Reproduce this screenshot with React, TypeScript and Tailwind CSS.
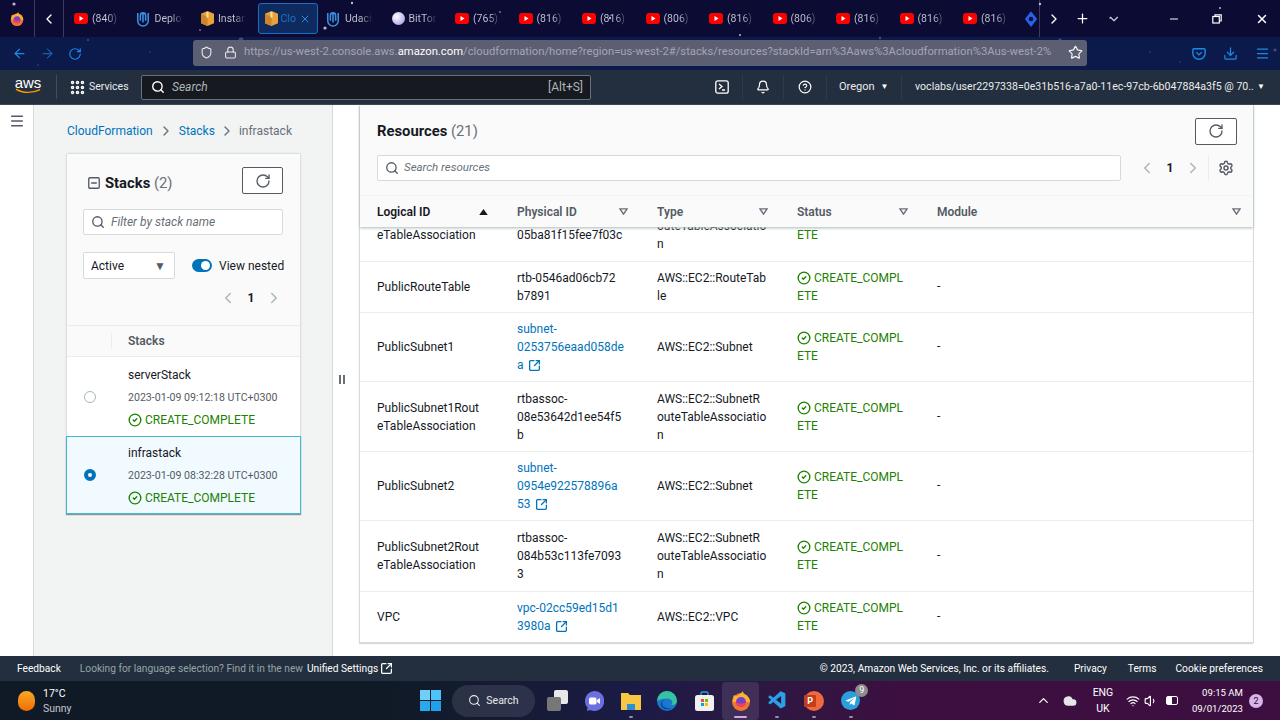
import { ReactNode } from "react";
import {
  ArrowLeft, ArrowRight, RotateCw, Shield, Lock, Star, Search, Bell, CircleHelp, Settings,
  ChevronLeft, ChevronRight, ChevronDown, ChevronUp, X, Plus, Minus, Menu, CircleCheck, SquareMinus,
  SquareArrowOutUpRight, Wifi, Volume1, Cloud, Grip, Download,
} from "lucide-react";
import { FaTelegramPlane } from "react-icons/fa";
import { VscVscode } from "react-icons/vsc";

const Youtube = () => (
  <svg viewBox="0 0 14 11" className="w-[14px] h-[11px] shrink-0">
    <rect width="14" height="11" rx="3" fill="#f00" />
    <path d="M5.5 3l4 2.5-4 2.5z" fill="#fff" />
  </svg>
);

const Udacity = () => (
  <svg viewBox="0 0 16 18" className="w-[14px] h-[16px] shrink-0 -ml-[2px] mr-[1px]" fill="none" stroke="#3b8fe0" strokeWidth="1.8">
    <path d="M2 2v9a6 6 0 0 0 12 0V2" />
    <path d="M8 13V2c-2 0-3 1-3 3v6M8 2c2 0 3 1 3 3v6" />
  </svg>
);

const AwsBox = () => (
  <svg viewBox="0 0 14 16" className="w-[13px] h-[15px] shrink-0">
    <path d="M7 0l7 3v10l-7 3-7-3V3z" fill="#e8a33a" />
    <path d="M7 6v10l-7-3V3z" fill="#c9862a" />
    <path d="M6 1h2v6H6z" fill="#fbe3a8" />
  </svg>
);

const BitTorrent = () => (
  <span className="w-[13px] h-[13px] rounded-full shrink-0 bg-[radial-gradient(circle_at_35%_35%,#ffffff,#9a8ee0)]" />
);

const Firefox = ({ size }: { size: string }) => (
  <svg viewBox="0 0 20 20" className={size}>
    <circle cx="10" cy="11" r="9" fill="#f2762e" />
    <path d="M3 4c1 1 2 1 3 1 2-2 5-3 6-5 0 2 1 3 3 4 3 2 4 5 4 7H2c0-3 0-5 1-7z" fill="#f9b233" />
    <circle cx="10" cy="11" r="5" fill="#7b3fc4" />
    <path d="M5 11a5 5 0 0 0 10 0c-2 2-7 2-10 0z" fill="#f0405f" />
  </svg>
);

const Edge = () => (
  <svg viewBox="0 0 20 20" className="w-[20px] h-[20px]">
    <circle cx="10" cy="10" r="10" fill="#1a78cf" />
    <path d="M0 10a10 10 0 0 1 20 0c0 3-3 4.500-6 4 2.500-2 1.500-6.500-4-6.500-4 0-8 1-10 2.500z" fill="#35c4a2" />
    <path d="M8 16c-3-1-4-5-1-7.500C5 9 3 12 4 15c1 2 3 3.500 6 3.500 2 0 3.500-.5 5-1.500-2 .5-5 .5-7-1z" fill="#0f4f9e" />
  </svg>
);

const tabs = [
  { icon: <Youtube />, label: "(840) - Y" },
  { icon: <Udacity />, label: "Deploy" },
  { icon: <AwsBox />, label: "Instance" },
  { icon: <AwsBox />, label: "Cloud", active: true },
  { icon: <Udacity />, label: "Udacity" },
  { icon: <BitTorrent />, label: "BitTorr" },
  { icon: <Youtube />, label: "(765) Y" },
  { icon: <Youtube />, label: "(816) Y" },
  { icon: <Youtube />, label: "(816) Y" },
  { icon: <Youtube />, label: "(806) Y" },
  { icon: <Youtube />, label: "(816) Y" },
  { icon: <Youtube />, label: "(806) Y" },
  { icon: <Youtube />, label: "(816) Y" },
  { icon: <Youtube />, label: "(816) Y" },
  { icon: <Youtube />, label: "(816) Y" },
];

const stars = [
  [14, 4, 1.6], [88, 40, 1], [241, 40, 2.4], [325, 28, 1.6], [352, 3, 1.2], [610, 18, 1.2], [500, 12, 0.8],
  [1040, 4, 1.2], [1060, 40, 1.6], [1110, 18, 0.8], [1220, 8, 1], [1060, 58, 0.8], [1150, 52, 0.8], [1275, 50, 1.6],
  [150, 52, 0.7], [38, 65, 0.8], [880, 38, 1.2], [740, 35, 1], [1180, 62, 0.7], [200, 30, 0.8],
];

function BrowserChrome() {
  return (
    <div className="relative h-[70px] shrink-0 bg-[#0b0b33]">
      {/* starfield */}
      <svg className="absolute inset-0 w-[1280px] h-[70px]" viewBox="0 0 1280 70">
        {stars.map(([x, y, r], i) => (
          <circle key={i} cx={x} cy={y} r={r} fill="#dfe4ff" opacity="0.8" />
        ))}
      </svg>

      {/* tab strip */}
      <div className="relative h-[37px] flex items-center">
        <div className="w-[34px] flex justify-center">
          <Firefox size="w-[14px] h-[14px]" />
        </div>
        <div className="w-[30px] h-[37px] flex items-center justify-center border-l border-r border-white/20">
          <ChevronLeft size={16} className="text-white" />
        </div>
        <div className="flex items-center ml-[10px]">
          {tabs.map((t, i) =>
            t.active ? (
              <div key={i} className="w-[60px] -ml-[7px] mr-[10.5px] h-[31px] flex items-center gap-[3px] pl-[6px] rounded-[3px] border border-[#1b6fc0] bg-[#0e2a5e]">
                {t.icon}
                <span className="text-[10.5px] w-[15px] overflow-hidden whitespace-nowrap text-[#1f6fc0]">Clo</span>
                <X size={12} className="text-[#2b8ae6]" />
              </div>
            ) : (
              <div key={i} className="w-[63.5px] h-[31px] flex items-center gap-[4px]">
                {t.icon}
                <span className="w-[28px] text-[10.5px] overflow-hidden whitespace-nowrap bg-linear-to-r from-[#c8c8d6] from-55% to-transparent bg-clip-text text-transparent">
                  {t.label}
                </span>
              </div>
            )
          )}
        </div>
        <svg viewBox="0 0 16 18" className="w-[14px] h-[16px] -ml-[3px]">
          <path d="M8 0l7 9-7 9-7-9z" fill="#2563eb" />
          <circle cx="8" cy="9" r="2.6" fill="#0b0b33" />
        </svg>
        <div className="w-[30px] h-[37px] flex items-center justify-center border-l border-white/20 ml-[1px]">
          <ChevronRight size={16} className="text-white" />
        </div>
        <Plus size={15} className="text-white ml-[6px]" />
        <ChevronDown size={14} className="text-white/80 ml-[17px]" />
        <div className="ml-auto flex items-center text-white">
          <Minus size={12} className="mr-[32px]" />
          <svg viewBox="0 0 10 10" className="w-[10px] h-[10px] mr-[33px]" fill="none" stroke="#fff" strokeWidth="1.2">
            <rect x="0.8" y="2.5" width="6.5" height="6.5" />
            <path d="M3 2.5V0.8h6.2V7H7.3" />
          </svg>
          <X size={14} strokeWidth={2.5} className="mr-[11px]" />
        </div>
      </div>

      {/* url row */}
      <div className="relative h-[33px] flex items-center bg-[#0d2055]/70">
        <ArrowLeft size={15} className="ml-[12px] text-[#1b8ae6]" />
        <ArrowRight size={15} className="ml-[13px] text-[#1560a8]" />
        <RotateCw size={14} className="ml-[13px] text-[#1b8ae6]" />
        <div className="ml-[111px] w-[894px] h-[26px] -mt-[2px] rounded-[3px] bg-[#5c5e72] flex items-center">
          <Shield size={13} className="ml-[7px] text-white/85" />
          <Lock size={13} className="ml-[11px] text-white/85" />
          <span className="ml-[7px] w-[812px] overflow-hidden whitespace-nowrap text-[11.25px] text-[#a3a5b4]">
            https://us-west-2.console.aws.<span className="text-white">amazon.com</span>/cloudformation/home?region=us-west-2#/stacks/resources?stackId=arn%3Aaws%3Acloudformation%3Aus-west-2%
          </span>
          <Star size={15} className="ml-auto mr-[4px] text-white/90" />
        </div>
        <svg viewBox="0 0 16 16" className="w-[14px] h-[14px] ml-[105px]" fill="none" stroke="#1b8ae6" strokeWidth="1.6">
          <path d="M2 2h12a1 1 0 0 1 1 1v4a7 7 0 0 1-14 0V3a1 1 0 0 1 1-1z" />
          <path d="M5 6l3 3 3-3" />
        </svg>
        <Download size={15} className="ml-[17px] text-[#1b8ae6]" />
        <Menu size={15} className="ml-[17px] text-[#1b8ae6]" />
      </div>
    </div>
  );
}

function AwsNav() {
  return (
    <div className="h-[35px] shrink-0 bg-[#232f3e] flex items-center text-white text-[11px] border-b border-[#3b4754]">
      <div className="w-[56px] flex flex-col items-center relative">
        <span className="text-[15px] leading-[13px] font-normal -mt-[4px]" style={{ fontFamily: "'Liberation Sans', sans-serif" }}>aws</span>
        <svg viewBox="0 0 28 6" className="w-[27px] h-[6px] -mt-[1px]" fill="none">
          <path d="M1 1c7 4.5 17 4.5 25 .5" stroke="#ff9900" strokeWidth="1.5" />
        </svg>
      </div>
      <div className="w-px h-[24px] bg-[#414d5c]" />
      <Grip size={17} strokeWidth={3} className="ml-[12px]" />
      <span className="ml-[3px] w-[52px] text-[10.5px] text-[#e9ebed]">Services</span>
      <div className="w-[450px] h-[25px] flex items-center bg-[#16191f] border border-[#687078] rounded-[2px] text-[#aab7b8]">
        <Search size={14} strokeWidth={2.4} className="ml-[9px] text-white" />
        <span className="ml-[7px] italic text-[12px]">Search</span>
        <span className="ml-auto mr-[7px] text-[12px]">[Alt+S]</span>
      </div>
      <svg viewBox="0 0 14 14" className="w-[14px] h-[14px] ml-[124px]" fill="none" stroke="#fff" strokeWidth="1.3">
        <rect x="0.8" y="0.8" width="12.4" height="12.4" rx="2" />
        <path d="M4 4l3 2.5L4 9M7 10h3" />
      </svg>
      <div className="w-px h-[24px] bg-[#2f3b4a] ml-[13px]" />
      <Bell size={14} className="ml-[13px]" />
      <div className="w-px h-[24px] bg-[#2f3b4a] ml-[13px]" />
      <CircleHelp size={14} className="ml-[14px]" />
      <div className="w-px h-[24px] bg-[#2f3b4a] ml-[14px]" />
      <span className="ml-[12px] text-[#e9ebed]">Oregon</span>
      <span className="ml-[6px] text-[8px]">▼</span>
      <div className="w-px h-[24px] bg-[#2f3b4a] ml-[13px]" />
      <span className="ml-[12.5px] w-[339px] overflow-hidden whitespace-nowrap text-[10.6px] text-[#e9ebed]">voclabs/user2297338=0e31b516-a7a0-11ec-97cb-6b047884a3f5 @ 70...</span>
      <span className="ml-[3px] text-[8px]">▼</span>
    </div>
  );
}

const StatusOk = ({ children }: { children: ReactNode }) => (
  <span className="flex items-center gap-[3px] text-[#1d8102]">
    <CircleCheck size={14} strokeWidth={2.3} />
    {children}
  </span>
);

function Pager() {
  return (
    <div className="flex items-center text-[#aab7b8]">
      <ChevronLeft size={18} strokeWidth={2} />
      <span className="w-[28px] text-center text-[12px] font-bold text-[#16191f]">1</span>
      <ChevronRight size={18} strokeWidth={2} />
    </div>
  );
}

function RefreshButton({ w }: { w: string }) {
  return (
    <button className={`${w} h-[27px] flex items-center justify-center bg-white border border-[#545b64] rounded-[2px]`}>
      <RotateCw size={16} strokeWidth={2} className="text-[#545b64]" />
    </button>
  );
}

function StackRow({ name, date, selected }: { name: string; date: string; selected?: boolean }) {
  return (
    <div className={selected
      ? "h-[78px] flex items-center bg-[#f1faff] border-t border-[#44b9d6] shadow-[0_1px_1px_#879596] -mx-px border-x border-b"
      : "h-[79px] flex items-center"}>
      <div className="w-[45px] flex justify-center">
        {selected ? (
          <span className="w-[12px] h-[12px] rounded-full border-[4px] border-[#0073bb] bg-white" />
        ) : (
          <span className="w-[12px] h-[12px] rounded-full border border-[#aab7b8] bg-white" />
        )}
      </div>
      <div className={`ml-[16px] flex flex-col text-[12px] text-[#16191f] ${selected ? "pt-[2px]" : "pt-[4px]"}`}>
        <span className="leading-[18px]">{name}</span>
        <span className="leading-[18px] mt-[5px] text-[10.6px] text-[#545b64]">{date}</span>
        <span className="leading-[22px] mt-[2px]"><StatusOk>CREATE_COMPLETE</StatusOk></span>
      </div>
    </div>
  );
}

function LeftPane() {
  return (
    <div className="w-[300px] shrink-0 bg-[#f2f3f3] border-l border-r border-[#d5dbdb] pl-[33px] pr-[32px]">
      <div className="h-[49px] flex items-center text-[12px] pt-[2px]">
        <span className="text-[#0073bb]">CloudFormation</span>
        <ChevronRight size={16} className="text-[#687078] mx-[5px]" />
        <span className="text-[#0073bb]">Stacks</span>
        <ChevronRight size={16} className="text-[#687078] mx-[4px]" />
        <span className="text-[#687078]">infrastack</span>
      </div>
      <div className="bg-white shadow-[0_0_2px_#aab7b8]">
        <div className="bg-[#fafafa] h-[171px] pt-[13px] pl-[16px] pr-[17px]">
          <div className="flex items-center h-[27px]">
            <SquareMinus size={14} strokeWidth={2.3} className="text-[#545b64] ml-[4px] mt-[5px]" />
            <span className="ml-[4px] text-[14.8px] font-bold text-[#16191f] mt-[5px]">Stacks <span className="font-normal text-[#687078]">(2)</span></span>
            <div className="ml-auto"><RefreshButton w="w-[41px]" /></div>
          </div>
          <div className="mt-[15px] h-[26px] flex items-center bg-white border border-[#d5dbdb] rounded-[2px]">
            <Search size={14} strokeWidth={2.3} className="ml-[7px] text-[#545b64]" />
            <span className="ml-[6px] text-[12px] italic text-[#687078]">Filter by stack name</span>
          </div>
          <div className="mt-[17px] flex items-center">
            <div className="w-[92px] shrink-0 h-[27px] flex items-center justify-between pl-[7px] pr-[8px] bg-white border border-[#d5dbdb] rounded-[2px] text-[12px] text-[#16191f]">
              Active
              <span className="text-[12px] text-[#545b64]">▼</span>
            </div>
            <div className="ml-[17px] w-[20px] h-[13px] shrink-0 rounded-full bg-[#0073bb] relative">
              <span className="absolute right-[2px] top-[2px] w-[9px] h-[9px] rounded-full bg-white" />
            </div>
            <span className="ml-[7px] text-[12px] text-[#16191f] whitespace-nowrap">View nested</span>
          </div>
          <div className="mt-[10px] flex justify-end"><Pager /></div>
        </div>
        <div className="h-[32px] flex items-center bg-[#fafafa] border-t border-b border-[#eaeded] text-[12px] font-semibold text-[#545b64]">
          <div className="w-[45px] h-[16px] border-r border-[#eaeded]" />
          <span className="ml-[16px]">Stacks</span>
        </div>
        <StackRow name="serverStack" date="2023-01-09 09:12:18 UTC+0300" />
        <StackRow name="infrastack" date="2023-01-09 08:32:28 UTC+0300" selected />
      </div>
    </div>
  );
}

function ColHead({ label, strong, grow }: { label: string; strong?: boolean; grow?: boolean }) {
  return (
    <div className={`${grow ? "flex-1" : "w-[140px]"} h-full flex items-center pl-[17px] pr-[12px] justify-between text-[12px] font-semibold ${strong ? "text-[#16191f]" : "text-[#545b64]"} relative`}>
      {label}
      {strong ? (
        <svg viewBox="0 0 10 7" className="w-[9px] h-[6px]"><path d="M5 0l5 7H0z" fill="#16191f" /></svg>
      ) : (
        <svg viewBox="0 0 10 8" className="w-[9px] h-[7px]" fill="none" stroke="#687078" strokeWidth="1.6"><path d="M1 1h8L5 7z" /></svg>
      )}
    </div>
  );
}

type Row = {
  h: string;
  logical: string[];
  physical: string[];
  link?: boolean;
  type: string[];
};

const rows: Row[] = [
  { h: "h-[71px] -mt-[36px]", logical: ["PublicSubnet1Rout", "eTableAssociation"], physical: ["rtbassoc-", "05ba81f15fee7f03c"], type: ["AWS::EC2::SubnetR", "outeTableAssociatio", "n"] },
  { h: "h-[51px]", logical: ["PublicRouteTable"], physical: ["rtb-0546ad06cb72", "b7891"], type: ["AWS::EC2::RouteTab", "le"] },
  { h: "h-[69px]", logical: ["PublicSubnet1"], physical: ["subnet-", "0253756eaad058de", "a"], link: true, type: ["AWS::EC2::Subnet"] },
  { h: "h-[70px]", logical: ["PublicSubnet1Rout", "eTableAssociation"], physical: ["rtbassoc-", "08e53642d1ee54f5", "b"], type: ["AWS::EC2::SubnetR", "outeTableAssociatio", "n"] },
  { h: "h-[69px]", logical: ["PublicSubnet2"], physical: ["subnet-", "0954e922578896a", "53"], link: true, type: ["AWS::EC2::Subnet"] },
  { h: "h-[71px]", logical: ["PublicSubnet2Rout", "eTableAssociation"], physical: ["rtbassoc-", "084b53c113fe7093", "3"], type: ["AWS::EC2::SubnetR", "outeTableAssociatio", "n"] },
  { h: "h-[51px]", logical: ["VPC"], physical: ["vpc-02cc59ed15d1", "3980a"], link: true, type: ["AWS::EC2::VPC"] },
];

function ResourceRow({ row }: { row: Row }) {
  return (
    <div className={`${row.h} flex items-center border-b border-[#eaeded] text-[12px] leading-[18px] text-[#16191f] whitespace-nowrap`}>
      <div className="w-[140px] pl-[17px]">
        {row.logical.map((l) => <div key={l}>{l}</div>)}
      </div>
      <div className={`w-[140px] pl-[17px] ${row.link ? "text-[#0073bb]" : ""}`}>
        {row.physical.map((l, i) => (
          <div key={l} className="flex items-center gap-[4px]">
            {l}
            {row.link && i === row.physical.length - 1 && <SquareArrowOutUpRight size={13} strokeWidth={2.4} />}
          </div>
        ))}
      </div>
      <div className="w-[140px] pl-[17px]">
        {row.type.map((l) => <div key={l}>{l}</div>)}
      </div>
      <div className="w-[140px] pl-[17px]">
        <StatusOk>CREATE_COMPL</StatusOk>
        <div className="text-[#1d8102]">ETE</div>
      </div>
      <div className="pl-[17px] mb-[2px]">-</div>
    </div>
  );
}

function ResourcesPanel() {
  return (
    <div className="w-[894px] h-[538px] shrink-0 bg-white border-r border-b border-[#d5dbdb] flex flex-col shadow-[-1px_1px_1px_#d5dbdb]">
      <div className="relative z-10 h-[122px] shrink-0 bg-[#fafafa] shadow-[0_1px_3px_#aab7b8]">
        <div className="h-[50px] flex items-center pl-[17px] pr-[16px] pt-[2px]">
          <span className="text-[14.8px] font-bold text-[#16191f]">Resources <span className="font-normal text-[#687078]">(21)</span></span>
          <div className="ml-auto"><RefreshButton w="w-[42px]" /></div>
        </div>
        <div className="h-[26px] flex items-center pl-[17px]">
          <div className="w-[744px] h-[26px] flex items-center bg-white border border-[#d5dbdb] rounded-[2px]">
            <Search size={14} strokeWidth={2.3} className="ml-[7px] text-[#545b64]" />
            <span className="ml-[5px] text-[11.5px] italic text-[#687078]">Search resources</span>
          </div>
          <div className="ml-[17px]"><Pager /></div>
          <div className="w-px h-[26px] bg-[#eaeded] ml-[6px]" />
          <Settings size={16} strokeWidth={2.2} className="ml-[9px] text-[#545b64]" />
        </div>
        <div className="h-[32px] mt-[14px] flex items-center border-t border-[#f2f3f3]">
          <ColHead label="Logical ID" strong />
          <ColHead label="Physical ID" />
          <ColHead label="Type" />
          <ColHead label="Status" />
          <ColHead label="Module" grow />
        </div>
      </div>
      <div className="flex-1 overflow-hidden">
        {rows.map((r, i) => <ResourceRow key={i} row={r} />)}
      </div>
    </div>
  );
}

function Footer() {
  return (
    <div className="h-[25px] shrink-0 bg-[#232f3e] flex items-center text-[10.2px] text-white">
      <span className="ml-[17px]">Feedback</span>
      <span className="ml-[19px] text-[#95a5a6]">Looking for language selection? Find it in the new</span>
      <span className="ml-[4px]">Unified Settings</span>
      <SquareArrowOutUpRight size={13} strokeWidth={2.3} className="ml-[2px]" />
      <span className="ml-auto">© 2023, Amazon Web Services, Inc. or its affiliates.</span>
      <span className="ml-[25px]">Privacy</span>
      <span className="ml-[21px]">Terms</span>
      <span className="ml-[19px] mr-[17px]">Cookie preferences</span>
    </div>
  );
}

const TaskIcon = ({ children, active, dot = true }: { children: ReactNode; active?: boolean; dot?: boolean }) => (
  <div className={`relative w-[36.7px] h-[38px] flex items-center justify-center rounded-[4px] ${active ? "bg-white/10" : ""}`}>
    {children}
    {dot && <span className={`absolute bottom-[2px] h-[2px] rounded-full ${active ? "w-[13px] bg-[#d7a8e8]" : "w-[4px] bg-white/50"}`} />}
  </div>
);

function Taskbar() {
  return (
    <div className="relative h-[39px] shrink-0 flex items-center text-white text-[10.5px] bg-linear-to-r from-[#101a26] from-30% via-[#1b1b45] via-50% to-[#3c0f40] to-70%">
      <span className="ml-[18px] w-[17px] h-[20px] rounded-full bg-linear-to-b from-[#f9a825] to-[#ef6c00]" />
      <div className="ml-[8px] w-[60px] flex flex-col leading-[15px]">
        <span>17°C</span>
        <span className="text-white/75">Sunny</span>
      </div>
      <div className="ml-[317px] w-[21px] h-[21px] grid grid-cols-2 gap-[1px]">
        <span className="bg-[#6fd0f7]" /><span className="bg-[#4fc3f7]" />
        <span className="bg-[#29a9ec]" /><span className="bg-[#1fa0e8]" />
      </div>
      <div className="ml-[11px] w-[83px] h-[32px] flex items-center justify-center gap-[5px] rounded-full bg-white/10 text-white/90">
        <Search size={13} />
        <span>Search</span>
      </div>
      <div className="ml-[4px] flex items-center">
        <TaskIcon dot={false}>
          <span className="relative w-[21px] h-[21px]">
            <span className="absolute right-0 top-0 w-[14px] h-[14px] rounded-[2px] bg-[#e8e8e8]" />
            <span className="absolute left-0 bottom-0 w-[14px] h-[14px] rounded-[2px] bg-[#777]" />
          </span>
        </TaskIcon>
        <TaskIcon dot={false}>
          <svg viewBox="0 0 20 20" className="w-[20px] h-[20px]">
            <path d="M10 0a10 10 0 1 1-4 19l-3 1 .5-3.500A10 10 0 0 1 10 0z" fill="#6b6fe0" />
            <rect x="5" y="6.500" width="7.500" height="7" rx="1.500" fill="#fff" />
            <path d="M13 9l3-2v6l-3-2z" fill="#fff" />
          </svg>
        </TaskIcon>
        <TaskIcon>
          <svg viewBox="0 0 20 18" className="w-[20px] h-[18px]">
            <path d="M0 1h7l2 2h11v15H0z" fill="#f7c744" />
            <path d="M6 12h8v6H6z" fill="#2a8fd8" />
          </svg>
        </TaskIcon>
        <TaskIcon dot={false}><Edge /></TaskIcon>
        <TaskIcon dot={false}>
          <svg viewBox="0 0 19 20" className="w-[19px] h-[20px]">
            <path d="M6 5V2.500A1.500 1.500 0 0 1 7.500 1h4A1.500 1.500 0 0 1 13 2.500V5" fill="none" stroke="#2a9fdc" strokeWidth="1.400" />
            <rect x="0" y="4" width="19" height="16" rx="2.500" fill="#f0f0f0" />
            <rect x="6" y="8" width="3" height="3" fill="#f25022" />
            <rect x="10" y="8" width="3" height="3" fill="#7fba00" />
            <rect x="6" y="12" width="3" height="3" fill="#00a4ef" />
            <rect x="10" y="12" width="3" height="3" fill="#ffb900" />
          </svg>
        </TaskIcon>
        <TaskIcon active><Firefox size="w-[20px] h-[20px]" /></TaskIcon>
        <TaskIcon><VscVscode className="text-[21px] text-[#2b9fe8]" /></TaskIcon>
        <TaskIcon>
          <span className="relative w-[20px] h-[20px] rounded-full bg-[#ee6a3c]">
            <span className="absolute left-0 top-[4px] w-[12px] h-[12px] rounded-[1px] bg-[#c23d1c] text-[9px] leading-[12px] font-bold text-center">P</span>
          </span>
        </TaskIcon>
        <TaskIcon>
          <span className="w-[19px] h-[19px] rounded-full bg-[#2a9fdc] flex items-center justify-center">
            <FaTelegramPlane className="text-[12px] text-white" />
          </span>
          <span className="absolute right-[1px] top-[2px] w-[13px] h-[13px] rounded-full bg-[#8d8d8d] text-[9px] leading-[13px] text-center">9</span>
        </TaskIcon>
      </div>
      <div className="ml-auto flex items-center">
        <ChevronUp size={15} />
        <Cloud size={14} fill="#e6e6e6" className="ml-[12px] text-[#e6e6e6]" />
        <div className="ml-[14px] w-[24px] flex flex-col items-center leading-[16px]">
          <span>ENG</span><span>UK</span>
        </div>
        <Wifi size={14} className="ml-[11px]" />
        <Volume1 size={14} className="ml-[4px]" />
        <span className="ml-[8px] w-[12px] h-[9px] rounded-[2px] border border-white flex">
          <span className="w-[5px] bg-white" />
        </span>
        <div className="ml-[14px] flex flex-col items-end leading-[16px] text-[9.6px]">
          <span>09:15 AM</span><span>09/01/2023</span>
        </div>
        <span className="ml-[6px] mr-[17px] w-[14px] h-[14px] rounded-full bg-[#d9b3ea] text-[#2b0f33] text-[9px] leading-[14px] text-center">2</span>
      </div>
    </div>
  );
}

export default function App() {
  return (
    <div className="w-[1280px] h-[720px] flex flex-col overflow-hidden bg-white" style={{ fontFamily: "Roboto, 'Noto Sans', sans-serif" }}>
      <BrowserChrome />
      <AwsNav />
      <div className="h-[551px] flex shrink-0 overflow-hidden">
        <div className="w-[33px] shrink-0 flex justify-center pt-[8px]">
          <Menu size={16} strokeWidth={2.2} className="text-[#545b64]" />
        </div>
        <LeftPane />
        <div className="w-[27px] shrink-0 flex justify-center items-start pt-[270px] pr-[9px]">
          <span className="w-[6px] h-[9px] border-x-2 border-[#687078]" />
        </div>
        <ResourcesPanel />
      </div>
      <Footer />
      <Taskbar />
    </div>
  );
}
